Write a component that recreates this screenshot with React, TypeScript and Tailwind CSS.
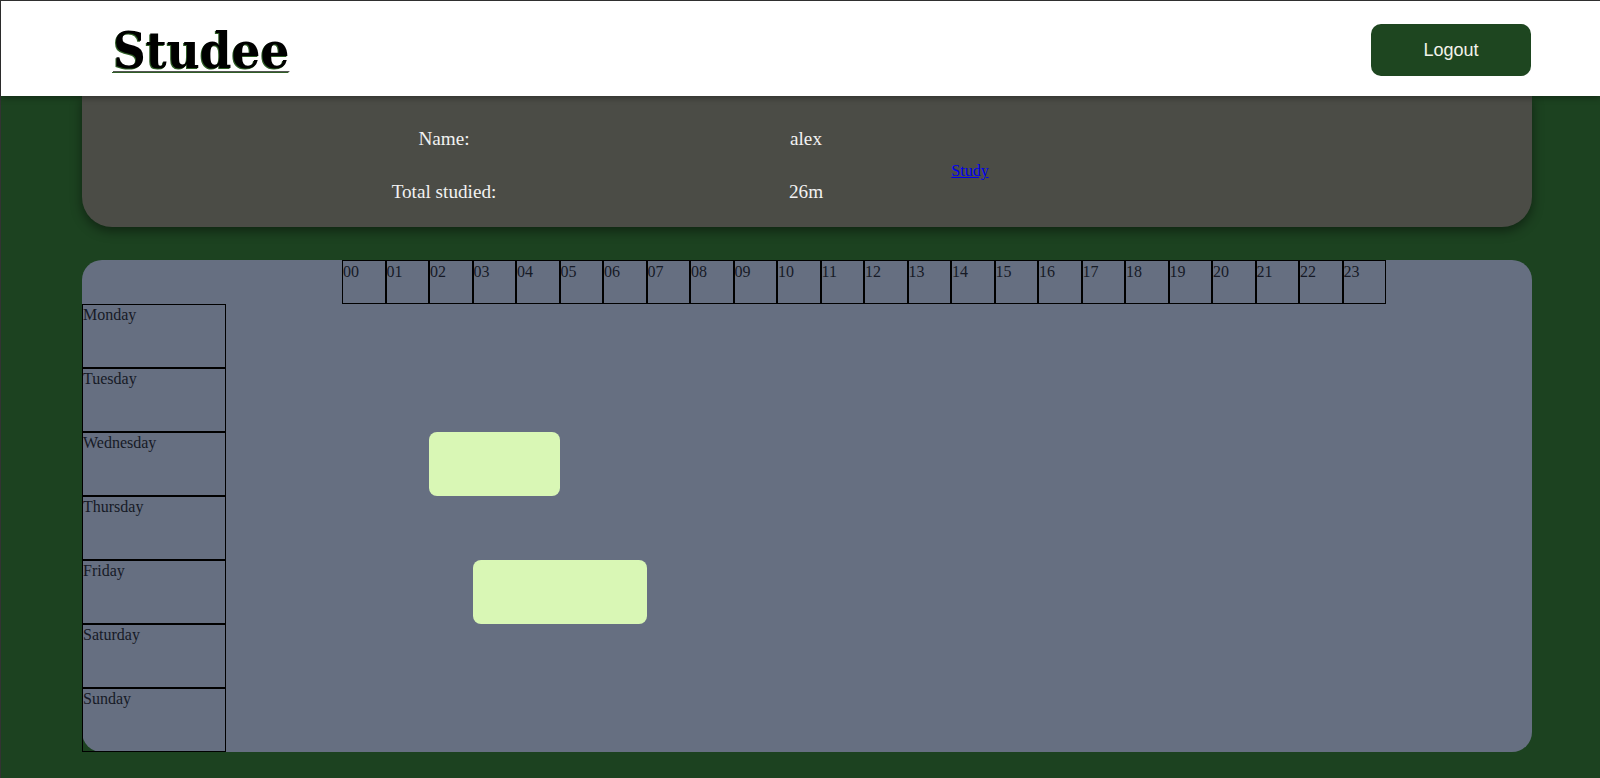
const hours = Array.from({ length: 24 }, (_, i) => String(i).padStart(2, "0"));

const days = [
  { name: "Monday" },
  { name: "Tuesday" },
  { name: "Wednesday", block: "col-start-3 col-span-3" },
  { name: "Thursday" },
  { name: "Friday", block: "col-start-4 col-span-4" },
  { name: "Saturday" },
  { name: "Sunday" },
];

const App = () => {
  return (
    <div className="min-h-screen bg-[#1c4220] border-t border-l border-[#333] font-['Liberation_Serif',serif]">
      {/* Header */}
      <header className="relative z-10 h-[95px] bg-white shadow-[0_2px_6px_rgba(0,0,0,0.35)]">
        <div className="ml-[81px] w-[1450px] h-full flex items-center justify-between">
          <a
            href="#"
            className="ml-[31px] mt-[6px] text-[50.5px] leading-none font-bold font-stretch-condensed text-black underline decoration-[#555] decoration-1 underline-offset-[3px] font-['DejaVu_Serif_Condensed','DejaVu_Serif',serif] [text-shadow:-1px_1px_0_#2f5f26]"
          >
            Studee
          </a>
          <button className="mt-[3px] mr-[1px] w-[160px] h-[52px] rounded-[10px] bg-[#1e4620] text-[#f3f3ea] text-[18px] font-['Liberation_Sans',sans-serif]">
            Logout
          </button>
        </div>
      </header>

      <main className="ml-[81px] w-[1450px]">
        {/* Info do usuário */}
        <section className="h-[131px] bg-[#4b4c46] rounded-b-[30px] shadow-[0_4px_12px_rgba(0,0,0,0.45)] pt-[32px]">
          <div className="ml-[144px] grid grid-cols-[436px_288px_40px] grid-rows-[53px_22px] text-[19.2px] leading-[22px] text-[#f2f2f2]">
            <div className="text-center">Name:</div>
            <div className="text-center">alex</div>
            <div className="row-span-2 text-center pt-[31px]">
              <a href="#" className="text-base leading-[18px] text-[#0000ee] underline">
                Study
              </a>
            </div>
            <div className="text-center">Total studied:</div>
            <div className="text-center">26m</div>
          </div>
        </section>

        {/* Calendário */}
        <section className="mt-[33px] h-[492px] bg-[#666f81] rounded-[20px] text-base text-[#161a26]">
          <div className="ml-[260px] flex leading-[22px]">
            {hours.map((h) => (
              <div key={h} className="w-[43.5px] h-[44px] border border-black">
                {h}
              </div>
            ))}
          </div>
          <div className="flex flex-col leading-[20px]">
            {days.map((d) => (
              <div key={d.name} className="flex h-[64px]">
                <div className="w-[144px] h-full border border-black">{d.name}</div>
                <div className="ml-[116px] grid grid-cols-[repeat(24,43.5px)]">
                  {d.block && <div className={`${d.block} h-full rounded-[8px] bg-[#d9f7b5]`} />}
                </div>
              </div>
            ))}
          </div>
        </section>
      </main>
    </div>
  );
};

export default App;
